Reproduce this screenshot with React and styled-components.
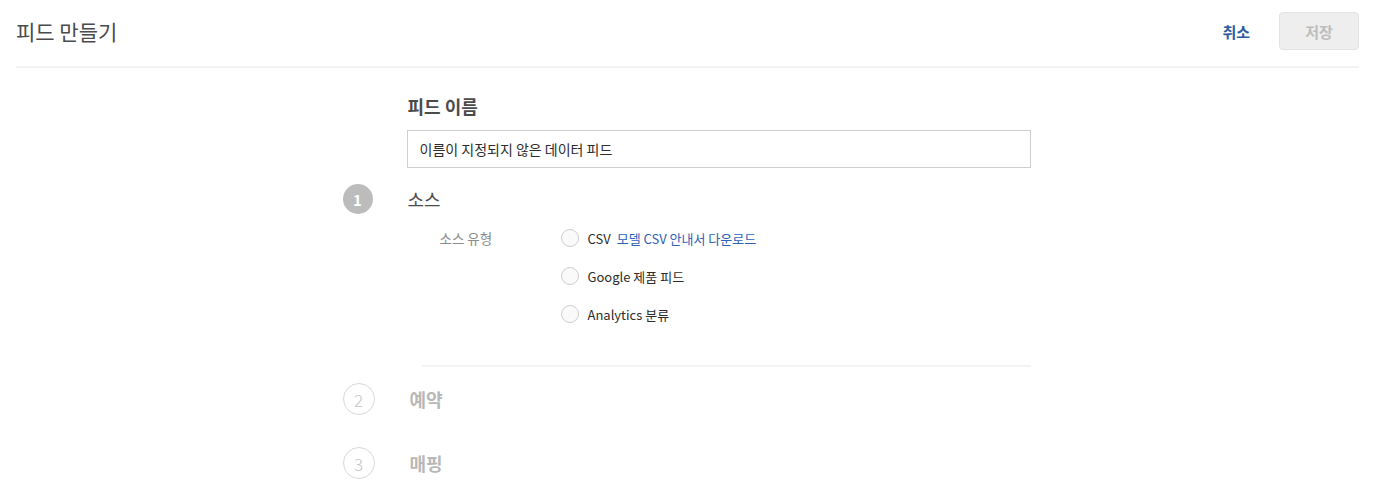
import React, { useState } from 'react'
import styled, { createGlobalStyle } from 'styled-components'

const GlobalStyle = createGlobalStyle`
    body {
        margin: 0;
        background: #fff;
        font-family: "Noto Sans CJK KR", "Noto Sans", sans-serif;
        color: #4b4b4b;
    }
`

const Header = styled.div`
    display: flex;
    align-items: center;
    margin: 0 14px 0 16px;
    padding: 12px 0 16px;
    border-bottom: 2px solid #f3f3f3;
`

const Title = styled.h1`
    flex: 1;
    margin: 0;
    font-size: 21px;
    font-weight: 400;
    color: #4b4b4b;
    line-height: 38px;
`

const CancelButton = styled.button`
    background: transparent;
    border: none;
    padding: 0;
    margin-right: 29px;
    font-family: inherit;
    font-size: 15px;
    font-weight: 700;
    color: #2d5b9f;
    cursor: pointer;
`

const SaveButton = styled.button`
    width: 80px;
    height: 38px;
    background: #eeeeee;
    border: 1px solid #e3e3e3;
    border-radius: 4px;
    font-family: inherit;
    font-size: 15px;
    font-weight: 700;
    color: #bdbdbd;
`

const Main = styled.div`
    width: 688px;
    margin: 0 auto;
    padding-top: 27px;
`

const Field = styled.div`
    margin-left: 64px;
`

const FieldLabel = styled.div`
    font-size: 18px;
    font-weight: 700;
    line-height: 22px;
    color: #4b4b4b;
    margin-left: 1px;
`

const NameInput = styled.input`
    box-sizing: border-box;
    width: 624px;
    height: 38px;
    margin-top: 13px;
    padding: 0 12px;
    border: 1px solid #cfcfcf;
    font-family: inherit;
    font-size: 14px;
    color: #2c2c2c;
    outline: none;
`

const Step = styled.div`
    margin-top: ${p => p.$top}px;
`

const StepHead = styled.div`
    display: flex;
    align-items: center;
    height: 32px;
`

const StepNumber = styled.div`
    box-sizing: border-box;
    width: ${p => (p.$active ? 30 : 32)}px;
    height: ${p => (p.$active ? 30 : 32)}px;
    margin-right: 35px;
    border-radius: 50%;
    display: flex;
    align-items: center;
    justify-content: center;
    background: ${p => (p.$active ? '#bcbcbc' : '#fff')};
    border: ${p => (p.$active ? 'none' : '1px solid #d9d9d9')};
    color: ${p => (p.$active ? '#fff' : '#c4c4c4')};
    font-size: ${p => (p.$active ? 15 : 17)}px;
    font-weight: ${p => (p.$active ? 700 : 300)};
`

const StepTitle = styled.div`
    font-size: 18px;
    font-weight: ${p => (p.$active ? 400 : 700)};
    color: ${p => (p.$active ? '#4b4b4b' : '#b8b8b8')};
`

const StepBody = styled.div`
    display: grid;
    grid-template-columns: 121px 1fr;
    margin: 4px 0 0 97px;
`

const TypeLabel = styled.div`
    font-size: 13.5px;
    line-height: 38px;
    color: #8c8c8c;
`

const RadioList = styled.div`
    display: flex;
    flex-direction: column;
`

const RadioRow = styled.label`
    display: flex;
    align-items: center;
    height: 38px;
    font-size: 13px;
    color: #2c2c2c;
    cursor: pointer;
`

const RadioCircle = styled.span`
    box-sizing: border-box;
    width: 18px;
    height: 18px;
    border-radius: 50%;
    border: 1px solid ${p => (p.$checked ? '#2d5b9f' : '#cfcfcf')};
    background: ${p => (p.$checked ? 'radial-gradient(#2d5b9f 35%, #fff 40%)' : '#fafafa')};
    margin-right: 9px;
`

const Link = styled.a`
    color: #2c62b8;
    text-decoration: none;
    margin-left: 6px;
`

const Divider = styled.div`
    height: 2px;
    background: #f3f3f3;
    margin: 32px 0 0 79px;
`

const sources = [
    { id: 'csv', label: 'CSV', link: '모델 CSV 안내서 다운로드' },
    { id: 'google', label: 'Google 제품 피드' },
    { id: 'analytics', label: 'Analytics 분류' },
]

export default function App() {
    const [source, setSource] = useState(null)

    return (
        <>
            <GlobalStyle />
            <Header>
                <Title>피드 만들기</Title>
                <CancelButton>취소</CancelButton>
                <SaveButton disabled>저장</SaveButton>
            </Header>

            <Main>
                <Field>
                    <FieldLabel>피드 이름</FieldLabel>
                    <NameInput defaultValue="이름이 지정되지 않은 데이터 피드" />
                </Field>

                <Step $top={15}>
                    <StepHead>
                        <StepNumber $active>1</StepNumber>
                        <StepTitle $active>소스</StepTitle>
                    </StepHead>
                    <StepBody>
                        <TypeLabel>소스 유형</TypeLabel>
                        <RadioList>
                            {sources.map(s => (
                                <RadioRow key={s.id} onClick={() => setSource(s.id)}>
                                    <RadioCircle $checked={source === s.id} />
                                    {s.label}
                                    {s.link && <Link href="#">{s.link}</Link>}
                                </RadioRow>
                            ))}
                        </RadioList>
                    </StepBody>
                    <Divider />
                </Step>

                <Step $top={16}>
                    <StepHead>
                        <StepNumber>2</StepNumber>
                        <StepTitle>예약</StepTitle>
                    </StepHead>
                </Step>

                <Step $top={32}>
                    <StepHead>
                        <StepNumber>3</StepNumber>
                        <StepTitle>매핑</StepTitle>
                    </StepHead>
                </Step>
            </Main>
        </>
    )
}
